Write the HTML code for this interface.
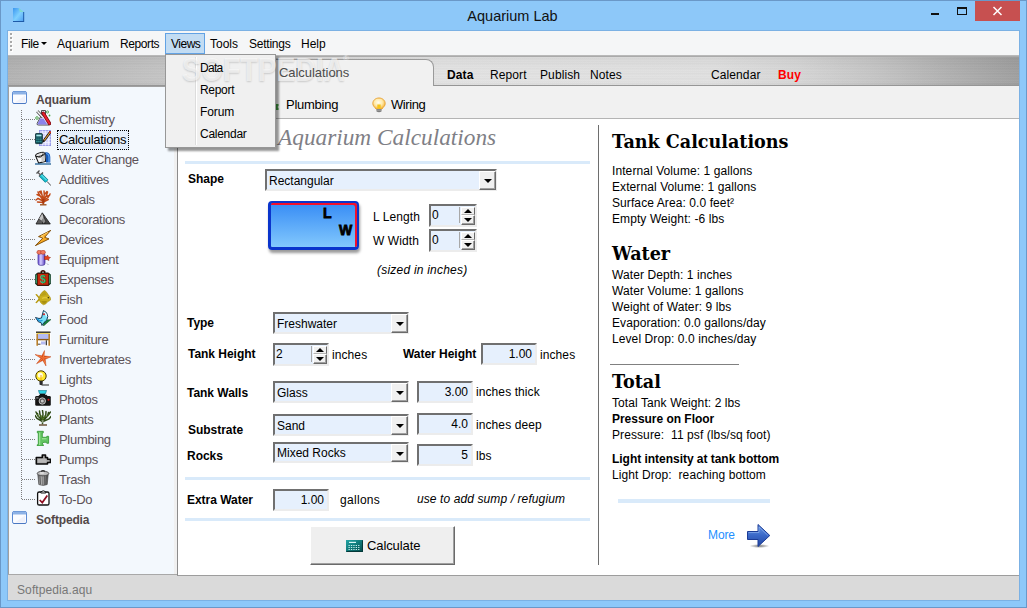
<!DOCTYPE html>
<html><head><meta charset="utf-8"><title>Aquarium Lab</title>
<style>
*{box-sizing:border-box;margin:0;padding:0}
html,body{width:1027px;height:608px;overflow:hidden}
body{background:#8dc8f9;font-family:"Liberation Sans",sans-serif;font-size:12px;color:#000;position:relative}
.abs,body>div,body>svg,body>span{position:absolute}
#frame{left:0;top:0;width:1027px;height:608px;border:1px solid #6a98c8}
#title{left:-1px;top:6px;width:1027px;text-align:center;font-size:14.5px;line-height:20px;color:#111}
#menubar{left:8px;top:31px;width:1011px;height:25px;background:#f5f6f7;border-bottom:1px solid #b9b9b9}
.mi{position:absolute;top:36px;font-size:12px;line-height:16px;color:#000;white-space:nowrap}
#views{left:165px;top:33px;width:40px;height:21px;background:#c2dcf3;border:1px solid #62a2e4}
#drop{left:165px;top:54px;width:111px;height:94px;z-index:4;background:#f0f0f0;border:1px solid #979797;box-shadow:3px 3px 2px rgba(0,0,0,.42)}
#drop i{position:absolute;left:29px;top:2px;width:1px;height:88px;background:#dcdcdc;border-right:1px solid #fff;width:2px}
.di{position:absolute;z-index:6;left:200px;font-size:12px;line-height:16px;white-space:nowrap}
#bar{left:8px;top:56px;width:1011px;height:30px;background:repeating-linear-gradient(180deg,rgba(255,255,255,.05) 0,rgba(0,0,0,.03) 2px,rgba(255,255,255,.04) 3px,rgba(0,0,0,.02) 5px),linear-gradient(180deg,rgba(0,0,0,.04),rgba(0,0,0,0) 45%,rgba(255,255,255,.04) 85%,rgba(0,0,0,.01)),linear-gradient(90deg,#b2b2b2,#c4c4c4 15.500%,#dadada 30%,#e3e3e3 43%,#e0e0e0 70%,#d6d6d6 78%,#c4c4c4 86%,#b0b0b0 93%,#9e9e9e);border-top:1px solid #aaa;border-bottom:1px solid #969696}
#tab{left:178px;top:59px;width:256px;height:28px;background:#f1f1f1;border-top:1px solid #9a9a9a;border-right:1px solid #9a9a9a;border-top-right-radius:8px}
.bt{position:absolute;top:67px;font-size:12px;line-height:16px;white-space:nowrap;letter-spacing:.1px}
#tree{left:8px;top:86px;width:166px;height:488px;background:#f3f8fd;border-left:1px solid #a0a0a0;border-top:1px solid #a0a0a0}
#gap{left:174px;top:86px;width:4px;height:488px;background:#f0f0f0}
#toolbar{left:178px;top:86px;width:841px;height:32px;background:#f1f1f1}
#panel{left:177px;top:118px;width:842px;height:458px;background:#fff;border-left:1px solid #8c8c8c;border-top:1px solid #b4b4b4;border-bottom:1px solid #9d9d9d}
#status{left:8px;top:574px;width:1011px;height:26px;background:#dadada;border-top:1px solid #a8a8a8}
#status span{position:absolute;left:9px;top:7px;font-size:12px;color:#777;line-height:16px;letter-spacing:.1px}
.ic{position:absolute}
.tb{position:absolute;font-weight:bold;font-size:12px;line-height:15px;color:#524848;white-space:nowrap;letter-spacing:-.15px}
.ti{position:absolute;font-size:13px;line-height:16px;color:#5c5258;white-space:nowrap;letter-spacing:-.3px}
.sel{position:absolute;font-size:13px;line-height:16px;color:#000;white-space:nowrap;border:1px dotted #000;background:#e4eefa;padding:1px 2px 1px 1px;height:20px;letter-spacing:-.3px}
.hd{position:absolute;width:13px;height:0;border-top:1px dotted #7c7c7c}
#vd{left:21px;top:110px;width:0;height:389px;border-left:1px dotted #7c7c7c}
.lb{position:absolute;font-weight:bold;font-size:12px;line-height:15px;white-space:nowrap;margin-top:1px;letter-spacing:-.03px}
.tx{position:absolute;font-size:12px;line-height:15px;white-space:nowrap;margin-top:1px;letter-spacing:.09px}
.it{position:absolute;font-size:12px;line-height:15px;font-style:italic;white-space:nowrap;margin-top:1px;letter-spacing:.1px}
.hr{position:absolute;height:3px;background:#d9eafa}
.sl{position:absolute;height:22px;background:#e6f0fd;border:2px solid;border-color:#707070 #ececec #ececec #707070;font-size:12px;line-height:21px;padding-left:2px;white-space:nowrap}
.sl b{position:absolute;right:-1px;top:0;bottom:-1px;width:17px;background:#f0f0f0;border:1px solid;border-color:#fff #6a6a6a #6a6a6a #fff;box-shadow:inset -1px -1px 0 #a0a0a0}
.sl b:after{content:"";position:absolute;left:3.5px;top:7px;border:4px solid transparent;border-top:4px solid #000;border-bottom:none}
.in{position:absolute;height:22px;background:#e6f0fd;border:2px solid;border-color:#707070 #ececec #ececec #707070;font-size:12px;line-height:18px;text-align:right;padding-right:3px;white-space:nowrap}
.sp{position:absolute;height:23px;background:#e6f0fd;border:2px solid;border-color:#707070 #ececec #ececec #707070;font-size:12px;line-height:18px;padding-left:1px;white-space:nowrap}
.sp u,.sp s{position:absolute;right:0;width:14px;background:#f0f0f0;border:1px solid;border-color:#fff #6a6a6a #6a6a6a #fff;text-decoration:none}
.sp u{top:1px;height:8px;border-bottom-color:#b4b4b4}.sp s{top:9px;height:10px;box-shadow:inset -1px -1px 0 #a0a0a0}
.sp i{position:absolute;right:15px;top:1px;width:1px;height:16px;background:#a8a8a8}
.sp u:after{content:"";position:absolute;left:1.5px;top:1px;border:4px solid transparent;border-bottom:4px solid #000;border-top:none}
.sp s:after{content:"";position:absolute;left:1.5px;top:2px;border:4px solid transparent;border-top:4px solid #000;border-bottom:none}
.h{position:absolute;font-family:"DejaVu Serif",serif;font-weight:bold;font-size:17.6px;line-height:24px;white-space:nowrap;letter-spacing:-.02px;margin-top:1px}
#ttl{left:278px;top:123px;font-family:"Liberation Serif",serif;font-style:italic;font-size:23.3px;line-height:28px;color:#7f7f86;white-space:nowrap}
#calc{left:310px;top:526px;width:145px;height:39px;background:#efefef;border:1px solid;border-color:#fff #6a6a6a #6a6a6a #fff;box-shadow:inset -1px -1px 0 #a0a0a0}
</style></head><body>
<div id="frame"></div>
<div style="left:7px;top:30px;width:1013px;height:571px;border:1px solid #7bb1e4"></div>
<svg style="left:13px;top:8px" width="12" height="14" viewBox="0 0 12 14"><defs><linearGradient id="g1" x1="0" y1="0" x2="1" y2="1"><stop offset="0" stop-color="#3a96f0"/><stop offset=".5" stop-color="#7fd0ff"/><stop offset="1" stop-color="#4a9af0"/></linearGradient></defs><path d="M0 0h5.500L11 4v10H0z" fill="url(#g1)"/><path d="M0 13.500h11M10.700 4v10" stroke="#1e5aa8" stroke-width="1"/><path d="M5.500 0L11 4H7z" fill="#7fd8d0"/></svg>
<div id="title">Aquarium Lab</div>
<div style="left:931px;top:13px;width:8px;height:2px;background:#111"></div>
<div style="left:957px;top:7px;width:10px;height:8px;border:1px solid #111;border-top-width:2px"></div>
<div style="left:975px;top:1px;width:45px;height:20px;background:#c75050"></div>
<svg style="left:992px;top:6px" width="11" height="10" viewBox="0 0 11 10"><path d="M1.500 1l8 8M9.500 1l-8 8" stroke="#fff" stroke-width="1.500"/></svg>

<div id="menubar"></div>
<div style="left:11px;top:34px;width:2px;height:18px;background:repeating-linear-gradient(180deg,#fff 0,#fff 2px,transparent 2px,transparent 4px)"></div><div style="left:10px;top:33px;width:2px;height:18px;background:repeating-linear-gradient(180deg,#a9a9a9 0,#a9a9a9 2px,transparent 2px,transparent 4px)"></div>
<div id="views"></div>
<div class="mi" style="left:21px;letter-spacing:-0.42px">File</div>
<div style="left:41px;top:42px;width:0;height:0;border:3px solid transparent;border-top:3px solid #000;border-bottom:none"></div>
<div class="mi" style="left:57px;letter-spacing:0.12px">Aquarium</div>
<div class="mi" style="left:120px;letter-spacing:-0.40px">Reports</div>
<div class="mi" style="left:171px;letter-spacing:-0.48px">Views</div>
<div class="mi" style="left:210px">Tools</div>
<div class="mi" style="left:249px;letter-spacing:-0.24px">Settings</div>
<div class="mi" style="left:301px">Help</div>

<div id="bar"></div>
<div id="tab"></div>
<div class="bt" style="left:279px;top:65px;font-size:13px;color:#4c4c4c;z-index:6;letter-spacing:-.05px">Calculations</div>
<div class="bt" style="left:447px;font-weight:bold">Data</div>
<div class="bt" style="left:490px">Report</div>
<div class="bt" style="left:540px">Publish</div>
<div class="bt" style="left:590px">Notes</div>
<div class="bt" style="left:711px">Calendar</div>
<div class="bt" style="left:778px;font-weight:bold;color:#f00">Buy</div>

<div id="status"><span>Softpedia.aqu</span></div>
<div id="tree"></div>
<div id="gap"></div>
<div id="vd"></div>
<svg class="ic" style="left:12px;top:91px" width="16" height="14" viewBox="0 0 16 14"><rect x=".5" y=".5" width="14" height="12" rx="1.600" fill="#fbfcff" stroke="#5b89d2"/><path d="M1 3.500V2Q1 1 2 1h11q1 0 1 1v1.500z" fill="#8db2e6"/><path d="M1 .500h13" stroke="#6f9ad8" stroke-width="1"/><path d="M13 4.500v7H3z" fill="#e9edf8" opacity=".7"/><path d="M1.500 12.500h12" stroke="#4a78c2" stroke-width="1"/></svg>
<div class="tb" style="left:36px;top:93px">Aquarium</div>
<div class="hd" style="left:22px;top:119px"></div>
<svg class="ic" style="left:35px;top:110px" width="16" height="16" viewBox="0 0 16 16"><path d="M6.500 .500h4v4.500l4.300 8.300q.700 1.700-1.200 1.700H3.400q-1.900 0-1.200-1.700L6.500 5z" fill="#eef0ff" stroke="#3a3a3a" stroke-width=".9"/><path d="M5.200 8.500L2.800 13.300q-.500 1.200.800 1.200h8.800L8.500 8.500z" fill="#8b82ea"/><path d="M2.300 1.300l5.500 6" stroke="#444" stroke-width="3"/><path d="M2.300 1.300l5.500 6" stroke="#f4f4f4" stroke-width="1.500"/><path d="M8.300 3.300l6.200 10.200" stroke="#7a0a10" stroke-width="3.400" stroke-linecap="round"/><path d="M8.300 3.300l6.200 10.200" stroke="#e8202c" stroke-width="2" stroke-linecap="round"/><circle cx="2" cy="8" r="1.300" fill="none" stroke="#3f9a3a" stroke-width=".9"/><circle cx="12.500" cy="2" r="1.100" fill="none" stroke="#3f9a3a" stroke-width=".8"/><circle cx="14.500" cy="5.500" r=".9" fill="#4aa840"/></svg>
<div class="ti" style="left:59px;top:112px">Chemistry</div>
<div class="hd" style="left:22px;top:139px"></div>
<svg class="ic" style="left:35px;top:130px" width="16" height="16" viewBox="0 0 16 16"><rect x="4.400" y=".400" width="11.200" height="15.200" fill="#d2d3fb" stroke="#8e92e6" stroke-width=".8"/><path d="M4.400 3.500h11.200M4.400 6.500h11.200M4.400 9.500h11.200M4.400 12.500h11.200M7.500 .400v15.200M10.500 .400v15.200M13.500 .400v15.200" stroke="#f4f4ff" stroke-width=".7"/><rect x=".400" y="3.600" width="7" height="10" rx=".8" fill="#0b4650" stroke="#04262c" stroke-width=".8"/><rect x="1.300" y="4.600" width="5.200" height="1.800" fill="#a8ecec"/><path d="M1.300 8h5.200M1.300 9.800h5.200M1.300 11.600h5.200" stroke="#3fa3a3" stroke-width="1.100" stroke-dasharray="1.300 .650"/><path d="M14.800 1.200L8.600 9.800 8 12l2-1.200 6-8.300z" fill="#f0a030" stroke="#111" stroke-width=".9" stroke-linejoin="round"/><path d="M14.300 1.600l1.600 1.200" stroke="#e03020" stroke-width="1.700"/><path d="M8 12l.5-1.800 1.300.9z" fill="#111"/></svg>
<div class="sel" style="left:57px;top:130px">Calculations</div>
<div class="hd" style="left:22px;top:159px"></div>
<svg class="ic" style="left:35px;top:150px" width="16" height="16" viewBox="0 0 16 16"><path d="M9.500 2.500q5.500-1 5.800 4.500V12.500h-4.300V8z" fill="#1658b8"/><path d="M11 3.500q3 .2 3 4V12" fill="none" stroke="#5aa2ee" stroke-width="1.200"/><g transform="rotate(-14 6 7)"><path d="M1 4.300h9.600l-1.200 8H2.200z" fill="#f6f6f6" stroke="#111" stroke-width="1"/><path d="M6.500 5.500l-1 6.500H8.800l1-6.500z" fill="#c9c9c9"/><ellipse cx="5.800" cy="4.300" rx="4.800" ry="1.700" fill="#e4e4e4" stroke="#111" stroke-width=".9"/><path d="M1.500 5Q6 9.500 9 4" fill="none" stroke="#222" stroke-width=".8"/></g><path d="M0 14h16" stroke="#1f5f94" stroke-width="1.300"/></svg>
<div class="ti" style="left:59px;top:152px">Water Change</div>
<div class="hd" style="left:22px;top:179px"></div>
<svg class="ic" style="left:35px;top:170px" width="16" height="16" viewBox="0 0 16 16"><path d="M1.500 3.500l3-3M4 6.500l4-4M2.800 2.200l3 3" stroke="#4a4a4a" stroke-width="1.300"/><path d="M2.800 2.200l3 3" stroke="#999" stroke-width=".6"/><path d="M5.800 5.200l6 6" stroke="#0a7f8c" stroke-width="4.200"/><path d="M5.800 5.200l6 6" stroke="#16c0d0" stroke-width="2.800"/><path d="M6.500 5l5 5" stroke="#8ef0f4" stroke-width=".9"/><path d="M12 11.400l4 4.300" stroke="#333" stroke-width=".9"/></svg>
<div class="ti" style="left:59px;top:172px">Additives</div>
<div class="hd" style="left:22px;top:199px"></div>
<svg class="ic" style="left:35px;top:190px" width="16" height="16" viewBox="0 0 16 16"><path d="M8.300 14V9.500M8 11L3 8.500 1 10M8 10L4.500 5 3 2M8 10l-1-5-1-4M8.300 10l1-5.500L9 1M8.500 10l3-4.500L12.500 2M8.500 10.500l4.500-3 2-3.500M5 6L2 4.500M11 6.500l3.500-1M6.500 4L4.500 1.500M10 4l2-2.500M8.300 12l5-2.500M8 12.500l-5.500-.5" stroke="#c24a18" stroke-width="1.500" stroke-linecap="round" fill="none"/><path d="M8.300 13.500V9" stroke="#a83a10" stroke-width="2.200"/><path d="M5 14.800h6.500" stroke="#9a4a12" stroke-width="1.300"/></svg>
<div class="ti" style="left:59px;top:192px">Corals</div>
<div class="hd" style="left:22px;top:219px"></div>
<svg class="ic" style="left:35px;top:210px" width="16" height="16" viewBox="0 0 16 16"><path d="M7.300 2.800L15.300 14H1z" fill="#2c2c2c" stroke="#1a1a1a" stroke-width=".8" stroke-linejoin="round"/><path d="M7.300 3.500L4 9l3 2 1.500-4z" fill="#c4c4c4"/><path d="M8.500 7L7 11l1.500 2.500 2-2z" fill="#8a8a8a"/><path d="M4 9l-2.300 4.500H7L7 11z" fill="#5a5a5a"/><path d="M9 4.500l5.500 9h-4L10.500 11z" fill="#444"/></svg>
<div class="ti" style="left:59px;top:212px">Decorations</div>
<div class="hd" style="left:22px;top:239px"></div>
<svg class="ic" style="left:35px;top:230px" width="16" height="16" viewBox="0 0 16 16"><path d="M15.800 .300L3.500 6.600l4.300 1.500L.300 15.700 14 8.900 9.700 7.300z" fill="#f6a821" stroke="#7a4a06" stroke-width=".9" stroke-linejoin="round"/><path d="M13 2.300L6 6.300l3 1" fill="none" stroke="#ffd878" stroke-width=".9"/></svg>
<div class="ti" style="left:59px;top:232px">Devices</div>
<div class="hd" style="left:22px;top:259px"></div>
<svg class="ic" style="left:35px;top:250px" width="16" height="16" viewBox="0 0 16 16"><defs><linearGradient id="eq" x1="0" x2="1"><stop offset="0" stop-color="#6a50d8"/><stop offset=".4" stop-color="#d8d0ff"/><stop offset="1" stop-color="#5a40c0"/></linearGradient></defs><rect x="3" y="3" width="7" height="12.300" rx="2.200" fill="url(#eq)" stroke="#3a2a90" stroke-width=".7"/><ellipse cx="4.300" cy="2.300" rx="2.400" ry="2" fill="#f07a60" stroke="#b03a28" stroke-width=".6"/><ellipse cx="8" cy="2.300" rx="2.400" ry="2" fill="#f07a60" stroke="#b03a28" stroke-width=".6"/><path d="M9.500 6.500h2l1-1.500 1 2 2 .5-2 1.500.5 1.500-2-1H9.500z" fill="#e8401c" stroke="#8a200a" stroke-width=".5"/><path d="M12 13.500l1.500 1.500" stroke="#889" stroke-width=".7"/></svg>
<div class="ti" style="left:59px;top:252px">Equipment</div>
<div class="hd" style="left:22px;top:279px"></div>
<svg class="ic" style="left:35px;top:270px" width="16" height="16" viewBox="0 0 16 16"><path d="M6.300 3V1.600Q8 0 9.700 1.600V3" fill="none" stroke="#3a0c04" stroke-width="1.500"/><path d="M.600 4.500L3 3h10l2.400 1.500V14L13 15.500H3L.600 14z" fill="#108050" stroke="#0a2a18" stroke-width=".8"/><path d="M2.200 3.300h11.600v12H2.200z" fill="#c42a0c" stroke="#3a0c04" stroke-width=".9"/><path d="M.800 6h1.200M.800 8h1.200M.800 10h1.200M.800 12h1.200M14 6h1.200M14 8h1.200M14 10h1.200M14 12h1.200" stroke="#5fe8a8" stroke-width=".8"/><text x="8" y="13.300" font-family="Liberation Sans, sans-serif" font-size="10.500" font-weight="bold" fill="#1fb878" text-anchor="middle">$</text></svg>
<div class="ti" style="left:59px;top:272px">Expenses</div>
<div class="hd" style="left:22px;top:299px"></div>
<svg class="ic" style="left:35px;top:290px" width="16" height="16" viewBox="0 0 16 16"><path d="M.300 4.500l3.500 4-3.500 4.200 1.300.6L4.800 10 4.800 7.500 1.800 4z" fill="#b89a10"/><path d="M3.800 8.500Q5 3 9.500 .300 12 2 13.500 5 15.800 7.500 16 9.500 14.500 11 13 11.500 11 14.500 8.500 14.800 5 13.500 3.800 8.500z" fill="#c9ae1c" stroke="#9a8208" stroke-width=".5"/><path d="M5.500 6Q8 2.500 9.800 1.300 11 3 11.500 5z" fill="#b8a018"/><path d="M6 11Q8 13.500 9 14 11 13 12 11z" fill="#a89010"/><path d="M7 8.500Q10 6.500 14 8.500" stroke="#e0c838" stroke-width="1.400" fill="none"/><circle cx="13.300" cy="7.800" r=".8" fill="#3a2c00"/></svg>
<div class="ti" style="left:59px;top:292px">Fish</div>
<div class="hd" style="left:22px;top:319px"></div>
<svg class="ic" style="left:35px;top:310px" width="16" height="16" viewBox="0 0 16 16"><path d="M8.500 16L16 9.500l-4.500.5-3 2.500z" fill="#15803a" stroke="#0a4a20" stroke-width=".5"/><path d="M8.500 .500Q12.500 2 12.800 6.500 12.500 11 9 12.500L7 15.500 6 12.500 3.500 12 .500 7.500 4 8.500 6.500 8 7.500 4z" fill="#78e0f8" stroke="#0a2a48" stroke-width=".9" stroke-linejoin="round"/><path d="M8.800 2Q11.500 3.500 11.500 6.500" fill="none" stroke="#e8fbff" stroke-width="1.300"/><path d="M2 8.500l2.500 2.500 3-.5" fill="none" stroke="#1890d8" stroke-width="1.200"/><circle cx="9" cy="4.200" r="1" fill="#e01818"/></svg>
<div class="ti" style="left:59px;top:312px">Food</div>
<div class="hd" style="left:22px;top:339px"></div>
<svg class="ic" style="left:35px;top:330px" width="16" height="16" viewBox="0 0 16 16"><rect x=".300" y="0" width="15.700" height="16" fill="#fdfdfd"/><path d="M1 2.200h14.500" stroke="#111" stroke-width="1.300"/><path d="M1.500 3.400h13.500" stroke="#e8c838" stroke-width=".9"/><rect x="2.500" y="4" width="11.500" height="5" fill="#b3baf2"/><path d="M1.500 9.600h13.500" stroke="#8a5a18" stroke-width="1.400"/><path d="M2.200 4v11.800M14.200 4v11.800" stroke="#b8802c" stroke-width="1.600"/><rect x="6" y="11.500" width="4.500" height="3" fill="#b3baf2"/><path d="M11.300 10.300v5" stroke="#111" stroke-width="1"/><path d="M3 14.200h2.500" stroke="#111" stroke-width=".8"/></svg>
<div class="ti" style="left:59px;top:332px">Furniture</div>
<div class="hd" style="left:22px;top:359px"></div>
<svg class="ic" style="left:35px;top:350px" width="16" height="16" viewBox="0 0 16 16"><path d="M9.500 .500l-.5 5.300L16 6.800 10.300 9.300 11 16 7.800 10.500 1.500 13.800 5.800 8.300 0 4.500l6.800 1.300z" fill="#e2501c" stroke="#b83a0c" stroke-width=".4" stroke-linejoin="round"/><path d="M9.300 2L8.300 7.500M14 7L8.500 8M10.500 14L8.300 8.500M3 12.500L7.500 8.500M1.500 5.200L7.500 7.500" stroke="#f28a4a" stroke-width=".8"/></svg>
<div class="ti" style="left:59px;top:352px">Invertebrates</div>
<div class="hd" style="left:22px;top:379px"></div>
<svg class="ic" style="left:35px;top:370px" width="16" height="16" viewBox="0 0 16 16"><path d="M6.500 15H14" stroke="#555" stroke-width="1.300"/><circle cx="6" cy="6" r="5.200" fill="#ffe92a" stroke="#4a3c00" stroke-width="1"/><circle cx="5.300" cy="5" r="2.600" fill="#fffce0"/><path d="M6 5v5" stroke="#f0a010" stroke-width=".9"/><path d="M4.500 10.800h3.200v3.800q-1.600 1-3.200 0z" fill="#2a2a2a"/></svg>
<div class="ti" style="left:59px;top:372px">Lights</div>
<div class="hd" style="left:22px;top:399px"></div>
<svg class="ic" style="left:35px;top:390px" width="16" height="16" viewBox="0 0 16 16"><path d="M3.500 .400h8l-1 3.400h-6z" fill="#2fd2e4" stroke="#0a6a80" stroke-width=".6"/><path d="M5 3.800h5V6.500H5z" fill="#111"/><rect x=".200" y="6" width="15.600" height="9.700" rx="1.300" fill="#141414"/><path d="M3.500 6l1-1.300h7l1 1.300z" fill="#141414"/><circle cx="7.300" cy="11" r="3.200" fill="#5a5a5a" stroke="#d0d0d0" stroke-width=".9"/><circle cx="7.300" cy="11" r="1.500" fill="#c8c8c8"/><circle cx="13.500" cy="9.800" r="1" fill="#d81818"/><rect x="1.200" y="7.300" width="2.300" height="1.200" fill="#888"/></svg>
<div class="ti" style="left:59px;top:392px">Photos</div>
<div class="hd" style="left:22px;top:419px"></div>
<svg class="ic" style="left:35px;top:410px" width="16" height="16" viewBox="0 0 16 16"><path d="M7.500 14V9M7.500 10.500L3 6 1 2M7.500 10L5 4.500 4.500 1M7.500 9.500L8 4 7.500 .500M7.800 10l3-5L11 1.500M8 11l5-5.500L15.500 2M7.500 11.500L2 8.500 0 5.500M8 11.500l6-2.500 2-2.500M3 6L2.500 3.500M12.500 6l1-3.500" stroke="#2f4a16" stroke-width="1.500" stroke-linecap="round" fill="none"/><path d="M7.500 9.500L6 5M8 9.500l2-4M4 7L2 4M12 7l2.500-3" stroke="#5f8a2a" stroke-width=".8" fill="none"/><path d="M6.500 10l1 3.500 1.500-3z" fill="#fff" opacity=".5"/><path d="M4 15h8" stroke="#7a6650" stroke-width="1.700"/></svg>
<div class="ti" style="left:59px;top:412px">Plants</div>
<div class="hd" style="left:22px;top:439px"></div>
<svg class="ic" style="left:35px;top:430px" width="16" height="16" viewBox="0 0 16 16"><path d="M2.300 1.300h6v1.500h-1v4.500h4.500V6.300h1.800v7h-1.800v-1H9q-1.700 0-1.700 1.700v.7h1v1.300h-6V14.700h1V2.800h-1z" fill="#63c463" stroke="#2f962f" stroke-width=".8" stroke-linejoin="round"/><path d="M4.700 2.500v12.500M7 8.800h4.500" stroke="#a8eca0" stroke-width="1"/></svg>
<div class="ti" style="left:59px;top:432px">Plumbing</div>
<div class="hd" style="left:22px;top:459px"></div>
<svg class="ic" style="left:35px;top:450px" width="16" height="16" viewBox="0 0 16 16"><path d="M1.300 7.500h6V5h3.200v2.500H12.500v1.700h3v3.300h-3V14H1.300z" fill="#a4a4a4" stroke="#0a0a0a" stroke-width="1.600" stroke-linejoin="round"/><path d="M3 9h8.500v3.500H3z" fill="#b8b8b8"/></svg>
<div class="ti" style="left:59px;top:452px">Pumps</div>
<div class="hd" style="left:22px;top:479px"></div>
<svg class="ic" style="left:35px;top:470px" width="16" height="16" viewBox="0 0 16 16"><defs><linearGradient id="tr" x1="0" x2="1"><stop offset="0" stop-color="#5a5a5a"/><stop offset=".35" stop-color="#d8d8d8"/><stop offset=".7" stop-color="#8a8a8a"/><stop offset="1" stop-color="#4a4a4a"/></linearGradient></defs><path d="M2.800 4.500h10.400l-1 10q-4.200 2-8.400 0z" fill="url(#tr)" stroke="#3a3a3a" stroke-width=".6"/><path d="M5 5.500l.5 9M7 5.500l.2 9.500M9.300 5.500l-.1 9.500M11.300 5.500l-.5 9" stroke="#444" stroke-width=".8"/><ellipse cx="8" cy="3.500" rx="5.800" ry="2.300" fill="#bdbdbd" stroke="#3a3a3a" stroke-width=".8"/><path d="M6 1.500Q8 -.300 10 1.500" fill="none" stroke="#333" stroke-width="1.100"/><ellipse cx="7" cy="3" rx="2.500" ry=".8" fill="#e8e8e8"/></svg>
<div class="ti" style="left:59px;top:472px">Trash</div>
<div class="hd" style="left:22px;top:499px"></div>
<svg class="ic" style="left:35px;top:490px" width="16" height="16" viewBox="0 0 16 16"><rect x="2.600" y="2" width="11.400" height="13" rx="1.600" fill="#fff" stroke="#111" stroke-width="1.300"/><path d="M5.800 3V1.800Q8.300 -.200 10.800 1.800V3z" fill="#e8e8e8" stroke="#111" stroke-width="1"/><path d="M4.700 10l2.600 2.600L12.300 5.500" fill="none" stroke="#8f0f22" stroke-width="1.700"/></svg>
<div class="ti" style="left:59px;top:492px">To-Do</div>
<svg class="ic" style="left:12px;top:511px" width="16" height="14" viewBox="0 0 16 14"><rect x=".5" y=".5" width="14" height="12" rx="1.600" fill="#fbfcff" stroke="#5b89d2"/><path d="M1 3.500V2Q1 1 2 1h11q1 0 1 1v1.500z" fill="#8db2e6"/><path d="M1 .500h13" stroke="#6f9ad8" stroke-width="1"/><path d="M13 4.500v7H3z" fill="#e9edf8" opacity=".7"/><path d="M1.500 12.500h12" stroke="#4a78c2" stroke-width="1"/></svg>
<div class="tb" style="left:36px;top:513px">Softpedia</div>

<div id="toolbar"></div>
<div class="tx" style="left:286px;top:96px;font-size:13px;letter-spacing:-.25px">Plumbing</div>
<svg style="left:371px;top:97px" width="16" height="16" viewBox="0 0 16 16"><defs><radialGradient id="gb" cx=".45" cy=".4" r=".6"><stop offset="0" stop-color="#fffdf0"/><stop offset=".55" stop-color="#ffe9a8"/><stop offset="1" stop-color="#f7b63a"/></radialGradient></defs><path d="M8 1C4.300 1 1.800 3.600 1.800 6.500 1.800 9 3.800 10 5 12h6c1.200-2 3.200-3 3.200-5.500C14.200 3.600 11.700 1 8 1z" fill="url(#gb)" stroke="#e9a53a" stroke-width="1"/><path d="M6.300 7.500h3.400v4H6.300z" fill="#f5c518"/><path d="M5.500 12h5v2.600q-2.500 1.200-5 0z" fill="#7d7d7d"/><path d="M5.500 13.200h5" stroke="#b5b5b5" stroke-width=".7"/></svg>
<div class="tx" style="left:391px;top:96px;font-size:13px;letter-spacing:-.4px">Wiring</div>
<svg style="left:273px;top:102px" width="6" height="10" viewBox="0 0 6 10"><path d="M0 2h5.500v2l-1 1 1 1v2H0z" fill="#3f9a3f"/></svg>

<div id="panel"></div>
<div id="ttl">Aquarium Calculations</div>
<div class="hr" style="left:185px;top:161px;width:405px"></div>
<div class="lb" style="left:188px;top:171px">Shape</div>
<div class="sl" style="left:265px;top:169px;width:232px">Rectangular<b></b></div>

<div style="left:268px;top:201px;width:91px;height:49px;border-radius:4px;background:linear-gradient(180deg,#378cf5,#82c8fd);border:solid #0a34cc;border-width:2px 2px 3px 3px;box-shadow:inset -2px 2px 0 0 #f2102c,1px 3px 3px rgba(0,0,0,.4)"></div>
<div class="lb" style="left:323px;top:204px;font-size:14px;font-weight:bold;line-height:16px;-webkit-text-stroke:.8px #000">L</div>
<div class="lb" style="left:339px;top:221px;font-size:14px;font-weight:bold;line-height:16px;-webkit-text-stroke:.8px #000">W</div>
<div class="tx" style="left:373px;top:209px">L Length</div>
<div class="tx" style="left:373px;top:233px">W Width</div>
<div class="sp" style="left:429px;top:204px;width:48px">0<i></i><u></u><s></s></div>
<div class="sp" style="left:429px;top:229px;width:48px">0<i></i><u></u><s></s></div>
<div class="it" style="left:377px;top:262px;letter-spacing:.22px">(sized in inches)</div>

<div class="lb" style="left:187px;top:315px">Type</div>
<div class="sl" style="left:273px;top:312px;width:136px">Freshwater<b></b></div>
<div class="lb" style="left:188px;top:346px">Tank Height</div>
<div class="sp" style="left:273px;top:343px;width:56px">2<i></i><u></u><s></s></div>
<div class="tx" style="left:332px;top:347px">inches</div>
<div class="lb" style="left:403px;top:346px">Water Height</div>
<div class="in" style="left:481px;top:343px;width:56px">1.00</div>
<div class="tx" style="left:540px;top:347px">inches</div>

<div class="lb" style="left:187px;top:385px">Tank Walls</div>
<div class="sl" style="left:273px;top:381px;width:136px">Glass<b></b></div>
<div class="in" style="left:417px;top:381px;width:56px">3.00</div>
<div class="tx" style="left:476px;top:384px">inches thick</div>

<div class="lb" style="left:188px;top:422px">Substrate</div>
<div class="sl" style="left:273px;top:414px;width:136px">Sand<b></b></div>
<div class="in" style="left:417px;top:413px;width:56px">4.0</div>
<div class="tx" style="left:476px;top:417px">inches deep</div>

<div class="lb" style="left:187px;top:448px">Rocks</div>
<div class="sl" style="left:273px;top:442px;width:136px;height:21px;line-height:19px">Mixed Rocks<b></b></div>
<div class="in" style="left:417px;top:444px;width:56px">5</div>
<div class="tx" style="left:476px;top:448px">lbs</div>

<div class="hr" style="left:185px;top:477px;width:405px"></div>
<div class="lb" style="left:187px;top:492px">Extra Water</div>
<div class="in" style="left:273px;top:489px;width:56px">1.00</div>
<div class="tx" style="left:340px;top:492px;letter-spacing:.3px">gallons</div>
<div class="it" style="left:417px;top:491px">use to add sump / refugium</div>
<div class="hr" style="left:185px;top:518px;width:405px"></div>

<div id="calc"></div>
<svg style="left:346px;top:540px" width="17" height="12" viewBox="0 0 17 12"><defs><linearGradient id="g4" x1="0" y1="0" x2="1" y2="1"><stop offset="0" stop-color="#25a5a5"/><stop offset=".5" stop-color="#0f7878"/><stop offset="1" stop-color="#054848"/></linearGradient></defs><rect x="0" y="0" width="17" height="12" fill="url(#g4)"/><path d="M.500 11.500h16V.500" fill="none" stroke="#043838" stroke-width="1"/><rect x="3" y="1.800" width="7" height="1.200" fill="#d8f4f4"/><path d="M2.500 5.500h12M2.500 7.500h12M2.500 9.500h12" stroke="#c4ecec" stroke-width="1" stroke-dasharray="1.300 1.100"/></svg>
<div class="tx" style="left:367px;top:537px;font-size:13px;line-height:16px;letter-spacing:-.1px">Calculate</div>

<div style="left:598px;top:125px;width:1px;height:440px;background:#6e6e6e"></div>

<div class="h" style="left:612px;top:129px">Tank Calculations</div>
<div class="tx" style="left:612px;top:163px">Internal Volume: 1 gallons</div>
<div class="tx" style="left:612px;top:179px">External Volume: 1 gallons</div>
<div class="tx" style="left:612px;top:195px">Surface Area: 0.0 feet²</div>
<div class="tx" style="left:612px;top:211px">Empty Weight: -6 lbs</div>
<div class="h" style="left:612px;top:241px">Water</div>
<div class="tx" style="left:612px;top:267px">Water Depth: 1 inches</div>
<div class="tx" style="left:612px;top:283px">Water Volume: 1 gallons</div>
<div class="tx" style="left:612px;top:299px">Weight of Water: 9 lbs</div>
<div class="tx" style="left:612px;top:315px">Evaporation: 0.0 gallons/day</div>
<div class="tx" style="left:612px;top:331px">Level Drop: 0.0 inches/day</div>
<div style="left:610px;top:364px;width:129px;height:1px;background:#808080"></div>
<div class="h" style="left:612px;top:369px">Total</div>
<div class="tx" style="left:612px;top:395px">Total Tank Weight: 2 lbs</div>
<div class="lb" style="left:612px;top:411px">Pressure on Floor</div>
<div class="tx" style="left:612px;top:427px;white-space:pre">Pressure:  11 psf (lbs/sq foot)</div>
<div class="lb" style="left:612px;top:451px">Light intensity at tank bottom</div>
<div class="tx" style="left:612px;top:467px;white-space:pre">Light Drop:  reaching bottom</div>
<div class="hr" style="left:618px;top:499px;width:152px;height:4px"></div>
<div class="tx" style="left:708px;top:527px;color:#1e8fff;letter-spacing:-.1px">More</div>
<svg style="left:746px;top:523px" width="26" height="27" viewBox="0 0 26 27"><defs><linearGradient id="g2" x1="0" y1="0" x2="0" y2="1"><stop offset="0" stop-color="#6a98e4"/><stop offset=".5" stop-color="#3a68c8"/><stop offset="1" stop-color="#2446a0"/></linearGradient><radialGradient id="g3"><stop offset="0" stop-color="#000" stop-opacity=".55"/><stop offset="1" stop-color="#000" stop-opacity="0"/></radialGradient></defs><ellipse cx="13.500" cy="23" rx="10" ry="2" fill="url(#g3)"/><path d="M1.500 8.500H12V1.500L23.800 12.500 12 23.500V16.500H1.500z" fill="url(#g2)" stroke="#1c3c96" stroke-width="1" stroke-linejoin="round"/><path d="M2.500 9.500H13V4l8.800 8.300" fill="none" stroke="#8fb4f0" stroke-width=".8" opacity=".8"/></svg>


<div id="drop"><i></i></div>
<div class="di" style="top:60px;letter-spacing:-0.70px">Data</div>
<div class="di" style="top:82px;letter-spacing:-0.30px">Report</div>
<div class="di" style="top:104px;letter-spacing:-0.10px">Forum</div>
<div class="di" style="top:126px;letter-spacing:-0.27px">Calendar</div>
<div style="left:182px;top:52px;font-size:33px;font-weight:bold;line-height:36px;color:rgba(255,255,255,.6);white-space:nowrap;transform:scaleX(.86);transform-origin:0 0;text-shadow:0 1px 2px rgba(0,0,0,.16);z-index:5">SOFTPEDIA</div>
<div style="left:343px;top:54px;font-size:8px;line-height:9px;color:rgba(255,255,255,.7);z-index:5">®</div>
</body></html>
